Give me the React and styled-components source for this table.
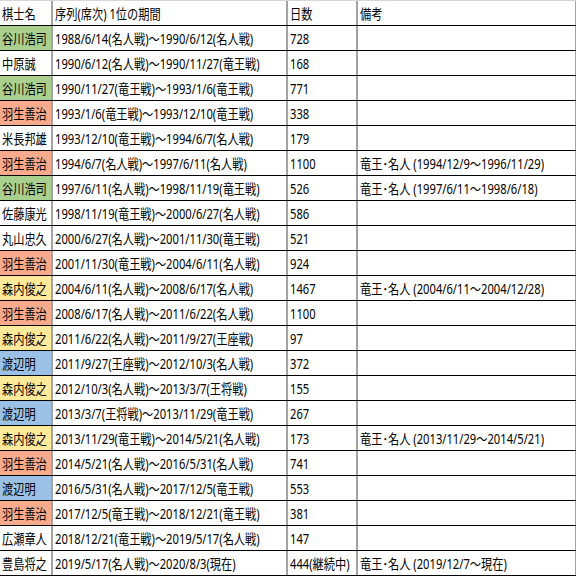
import React from "react";
import styled, { createGlobalStyle } from "styled-components";

const Global = createGlobalStyle`
  html, body { margin: 0; padding: 0; background: #fff; }
  body { font-family: "Noto Sans", "Noto Sans CJK JP", sans-serif; color: #000; }
`;

const Sheet = styled.div`
  width: 576px;
  display: flex;
  flex-direction: column;
`;

const Row = styled.div`
  display: grid;
  grid-template-columns: 53px 235px 70px 218px;
  box-sizing: border-box;
  height: ${(p) => (p.$header ? 26 : 25)}px;
  border-top: ${(p) => (p.$header ? "1px solid #d6d6d6" : "none")};
  border-bottom: 1px solid #000;
`;

const Cell = styled.div`
  box-sizing: border-box;
  display: flex;
  align-items: center;
  padding: 2px 0 0 2px;
  min-width: 0;
  overflow: hidden;
  white-space: nowrap;
  background: ${(p) => p.$bg || "transparent"};
  border-right: ${(p) => (p.$last ? 1 : 2)}px solid #a3a3a3;
  font-size: 14px;
  line-height: 1;
`;

const Text = styled.span`
  display: inline-block;
  transform: scaleX(0.8);
  transform-origin: left center;
`;

const COLORS = {
  g: "#a9d08e",
  r: "#f8ab8c",
  y: "#ffe99b",
  b: "#9bc2e6",
};

const data = [
  ["谷川浩司", "g", "1988/6/14(名人戦)～1990/6/12(名人戦)", "728", ""],
  ["中原誠", "", "1990/6/12(名人戦)～1990/11/27(竜王戦)", "168", ""],
  ["谷川浩司", "g", "1990/11/27(竜王戦)～1993/1/6(竜王戦)", "771", ""],
  ["羽生善治", "r", "1993/1/6(竜王戦)～1993/12/10(竜王戦)", "338", ""],
  ["米長邦雄", "", "1993/12/10(竜王戦)～1994/6/7(名人戦)", "179", ""],
  ["羽生善治", "r", "1994/6/7(名人戦)～1997/6/11(名人戦)", "1100", "竜王･名人 (1994/12/9～1996/11/29)"],
  ["谷川浩司", "g", "1997/6/11(名人戦)～1998/11/19(竜王戦)", "526", "竜王･名人 (1997/6/11～1998/6/18)"],
  ["佐藤康光", "", "1998/11/19(竜王戦)～2000/6/27(名人戦)", "586", ""],
  ["丸山忠久", "", "2000/6/27(名人戦)～2001/11/30(竜王戦)", "521", ""],
  ["羽生善治", "r", "2001/11/30(竜王戦)～2004/6/11(名人戦)", "924", ""],
  ["森内俊之", "y", "2004/6/11(名人戦)～2008/6/17(名人戦)", "1467", "竜王･名人 (2004/6/11～2004/12/28)"],
  ["羽生善治", "r", "2008/6/17(名人戦)～2011/6/22(名人戦)", "1100", ""],
  ["森内俊之", "y", "2011/6/22(名人戦)～2011/9/27(王座戦)", "97", ""],
  ["渡辺明", "b", "2011/9/27(王座戦)～2012/10/3(名人戦)", "372", ""],
  ["森内俊之", "y", "2012/10/3(名人戦)～2013/3/7(王将戦)", "155", ""],
  ["渡辺明", "b", "2013/3/7(王将戦)～2013/11/29(竜王戦)", "267", ""],
  ["森内俊之", "y", "2013/11/29(竜王戦)～2014/5/21(名人戦)", "173", "竜王･名人 (2013/11/29～2014/5/21)"],
  ["羽生善治", "r", "2014/5/21(名人戦)～2016/5/31(名人戦)", "741", ""],
  ["渡辺明", "b", "2016/5/31(名人戦)～2017/12/5(竜王戦)", "553", ""],
  ["羽生善治", "r", "2017/12/5(竜王戦)～2018/12/21(竜王戦)", "381", ""],
  ["広瀬章人", "", "2018/12/21(竜王戦)～2019/5/17(名人戦)", "147", ""],
  ["豊島将之", "", "2019/5/17(名人戦)～2020/8/3(現在)", "444(継続中)", "竜王･名人 (2019/12/7～現在)"],
];

export default function App() {
  return (
    <>
      <Global />
      <Sheet>
        <Row $header>
          <Cell><Text>棋士名</Text></Cell>
          <Cell><Text>序列(席次) 1位の期間</Text></Cell>
          <Cell><Text>日数</Text></Cell>
          <Cell $last><Text>備考</Text></Cell>
        </Row>
        {data.map(([name, c, period, days, note], i) => (
          <Row key={i}>
            <Cell $bg={COLORS[c]}><Text>{name}</Text></Cell>
            <Cell><Text>{period}</Text></Cell>
            <Cell><Text>{days}</Text></Cell>
            <Cell $last><Text>{note}</Text></Cell>
          </Row>
        ))}
      </Sheet>
    </>
  );
}
